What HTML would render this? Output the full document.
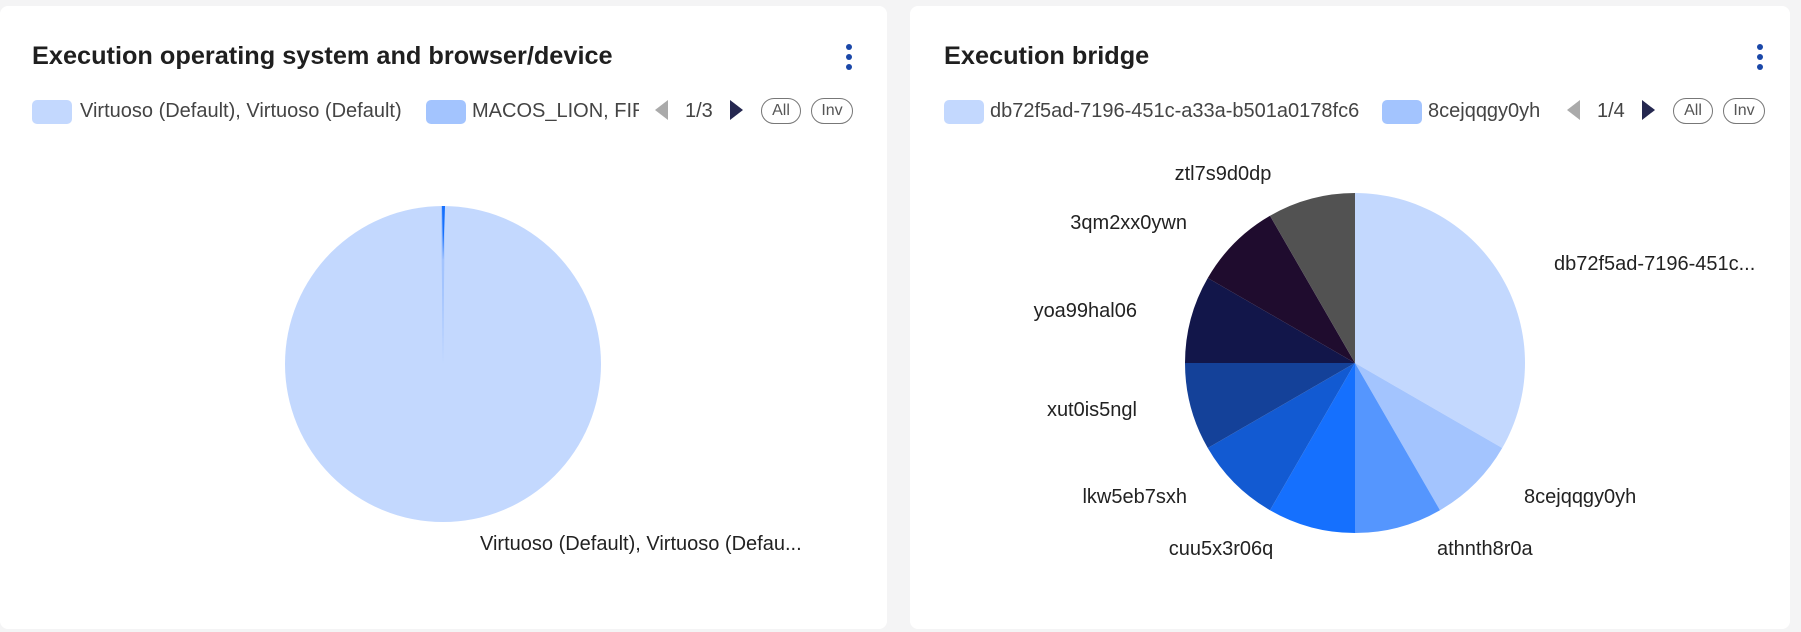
<!DOCTYPE html>
<html><head><meta charset="utf-8"><style>
*{margin:0;padding:0;box-sizing:border-box}
body{width:1801px;height:632px;background:#f4f4f5;font-family:"Liberation Sans",sans-serif;position:relative;overflow:hidden;color:#222}
.card{position:absolute;top:6px;height:623px;background:#fff;border-radius:8px}
.t{position:absolute;top:42px;font-size:25.3px;font-weight:bold;color:#1f1f1f}
.k{position:absolute;top:44px;width:6px}
.k i{display:block;width:6px;height:6px;border-radius:50%;background:#1a47a8;margin-bottom:4px}
.sw{position:absolute;top:100px;width:40px;height:24px;border-radius:5px}
.lt{position:absolute;top:100px;font-size:20px;color:#444;white-space:nowrap;overflow:hidden}
.pill{position:absolute;top:98px;height:26px;border:1.5px solid #777;border-radius:13px;font-size:16px;color:#555;text-align:center;line-height:23px}
.lab{position:absolute;font-size:20px;color:#222;white-space:nowrap}
.r{transform:translateX(-100%)}
.c{transform:translateX(-50%)}
</style></head><body>
<div class="card" style="left:0;width:887px"></div>
<div class="card" style="left:910px;width:880px"></div>

<div class="t" style="left:32px">Execution operating system and browser/device</div>
<div class="k" style="left:846px"><i></i><i></i><i></i></div>
<div class="sw" style="left:32px;background:#c3d8fe"></div>
<div class="lt" style="left:80px">Virtuoso (Default), Virtuoso (Default)</div>
<div class="sw" style="left:426px;background:#a3c4fe"></div>
<div class="lt" style="left:472px;width:167px">MACOS_LION, FIREFOX</div>
<svg style="position:absolute;left:655px;top:100px" width="14" height="20"><path d="M13 0L0 10L13 20Z" fill="#aaa"/></svg>
<div class="lt" style="left:685px;color:#444">1/3</div>
<svg style="position:absolute;left:730px;top:100px" width="14" height="20"><path d="M0 0L13 10L0 20Z" fill="#252850"/></svg>
<div class="pill" style="left:761px;width:40px">All</div>
<div class="pill" style="left:811px;width:42px">Inv</div>

<svg style="position:absolute;left:0;top:0" width="887" height="632">
<circle cx="443" cy="364" r="158" fill="#c3d8fe"/>
<path d="M443 364L441 206L445 206Z" fill="#a3c4fe"/>
<path d="M443 260L442 206L445 206Z" fill="#1570fe"/>
</svg>
<div class="lab" style="left:480px;top:533px">Virtuoso (Default), Virtuoso (Defau...</div>

<div class="t" style="left:944px">Execution bridge</div>
<div class="k" style="left:1757px"><i></i><i></i><i></i></div>
<div class="sw" style="left:944px;background:#c3d8fe"></div>
<div class="lt" style="left:990px">db72f5ad-7196-451c-a33a-b501a0178fc6</div>
<div class="sw" style="left:1382px;background:#a3c4fe"></div>
<div class="lt" style="left:1428px">8cejqqgy0yh</div>
<svg style="position:absolute;left:1567px;top:100px" width="14" height="20"><path d="M13 0L0 10L13 20Z" fill="#aaa"/></svg>
<div class="lt" style="left:1597px">1/4</div>
<svg style="position:absolute;left:1642px;top:100px" width="14" height="20"><path d="M0 0L13 10L0 20Z" fill="#252850"/></svg>
<div class="pill" style="left:1673px;width:40px">All</div>
<div class="pill" style="left:1723px;width:42px">Inv</div>

<svg style="position:absolute;left:0;top:0" width="1801" height="632" id="p"></svg>
<script>
(function(){var s=document.getElementById('p'),cx=1355,cy=363,r=170;
var seg=[[0,120,'#c3d8fe'],[120,150,'#a3c4fe'],[150,180,'#5596fe'],[180,210,'#1570fe'],[210,240,'#125ad2'],[240,270,'#144199'],[270,300,'#12164a'],[300,330,'#1f0c2e'],[330,360,'#525252']];
function pt(a){a=a*Math.PI/180;return [cx+r*Math.sin(a),cy-r*Math.cos(a)]}
var h='';seg.forEach(function(g){var p=pt(g[0]),q=pt(g[1]);h+='<path d="M'+cx+' '+cy+'L'+p[0]+' '+p[1]+'A'+r+' '+r+' 0 '+(g[1]-g[0]>180?1:0)+' 1 '+q[0]+' '+q[1]+'Z" fill="'+g[2]+'"/>'});
s.innerHTML=h;})();
</script>
<div class="lab c" style="left:1223px;top:163px">ztl7s9d0dp</div>
<div class="lab r" style="left:1187px;top:212px">3qm2xx0ywn</div>
<div class="lab" style="left:1554px;top:253px">db72f5ad-7196-451c...</div>
<div class="lab r" style="left:1137px;top:300px">yoa99hal06</div>
<div class="lab r" style="left:1137px;top:399px">xut0is5ngl</div>
<div class="lab r" style="left:1187px;top:486px">lkw5eb7sxh</div>
<div class="lab c" style="left:1221px;top:538px">cuu5x3r06q</div>
<div class="lab" style="left:1437px;top:538px">athnth8r0a</div>
<div class="lab" style="left:1524px;top:486px">8cejqqgy0yh</div>
</body></html>
